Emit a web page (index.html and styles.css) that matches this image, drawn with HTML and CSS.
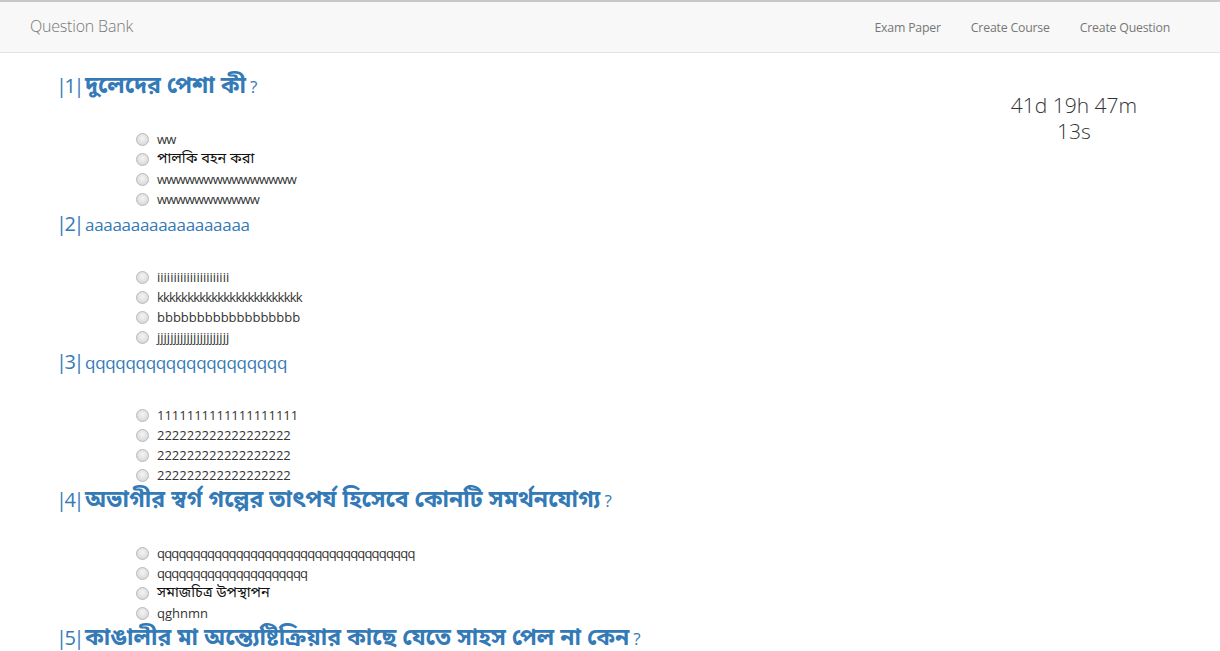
FILE: index.html
```html
<!DOCTYPE html>
<html lang="bn">
<head>
<meta charset="utf-8">
<title>Question Bank</title>
<link rel="stylesheet" href="styles.css">
</head>
<body>
<nav class="navbar">
  <a class="brand" href="#">Question Bank</a>
  <ul class="nav">
    <li><a href="#">Exam Paper</a></li>
    <li><a href="#">Create Course</a></li>
    <li><a href="#">Create Question</a></li>
  </ul>
</nav>
<div class="page">
  <main class="questions">
    <section class="question">
      <h3 class="q-title"><span class="num">|1|</span> <span class="bn">দুলেদের পেশা কী</span> ?</h3>
      <ul class="options">
        <li><span class="radio"></span><span class="narrow">ww</span></li>
        <li><span class="radio"></span><span class="bn-opt">পালকি বহন করা</span></li>
        <li><span class="radio"></span><span class="narrow">wwwwwwwwwwwwwww</span></li>
        <li><span class="radio"></span><span class="narrow">wwwwwwwwwww</span></li>
      </ul>
    </section>
    <section class="question">
      <h3 class="q-title"><span class="num">|2|</span> aaaaaaaaaaaaaaaaaa</h3>
      <ul class="options">
        <li><span class="radio"></span>iiiiiiiiiiiiiiiiiiiiii</li>
        <li><span class="radio"></span><span class="narrow">kkkkkkkkkkkkkkkkkkkkkkkk</span></li>
        <li><span class="radio"></span>bbbbbbbbbbbbbbbbbb</li>
        <li><span class="radio"></span>jjjjjjjjjjjjjjjjjjjjjj</li>
      </ul>
    </section>
    <section class="question">
      <h3 class="q-title"><span class="num">|3|</span> qqqqqqqqqqqqqqqqqqqq</h3>
      <ul class="options">
        <li><span class="radio"></span>1111111111111111111</li>
        <li><span class="radio"></span>222222222222222222</li>
        <li><span class="radio"></span>222222222222222222</li>
        <li><span class="radio"></span>222222222222222222</li>
      </ul>
    </section>
    <section class="question">
      <h3 class="q-title"><span class="num">|4|</span> <span class="bn">অভাগীর স্বর্গ গল্পের তাৎপর্য হিসেবে কোনটি সমর্থনযোগ্য</span> ?</h3>
      <ul class="options">
        <li><span class="radio"></span><span class="narrow">qqqqqqqqqqqqqqqqqqqqqqqqqqqqqqqqqqqq</span></li>
        <li><span class="radio"></span><span class="narrow">qqqqqqqqqqqqqqqqqqqqq</span></li>
        <li><span class="radio"></span><span class="bn-opt">সমাজচিত্র উপস্থাপন</span></li>
        <li><span class="radio"></span>qghnmn</li>
      </ul>
    </section>
    <section class="question">
      <h3 class="q-title"><span class="num">|5|</span> <span class="bn">কাঙালীর মা অন্ত্যেষ্টিক্রিয়ার কাছে যেতে সাহস পেল না কেন</span> ?</h3>
    </section>
  </main>
  <aside class="timer">41d 19h 47m<br>13s</aside>
</div>
</body>
</html>
```
FILE: styles.css
```css
html, body {
  margin: 0;
  padding: 0;
}
body {
  font-family: "Open Sans", "Noto Sans", sans-serif;
  font-size: 14px;
  color: #333;
  background: #fff;
  overflow: hidden;
}
.navbar {
  display: flex;
  align-items: center;
  justify-content: space-between;
  height: 48px;
  background: #f8f8f8;
  border-top: 2px solid #c8c8c8;
  border-bottom: 1px solid #e2e2e2;
  padding: 0 50px 2px 30px;
}
.brand {
  font-size: 16px;
  font-weight: 300;
  color: #777;
  text-decoration: none;
  letter-spacing: -0.2px;
}
.nav {
  display: flex;
  gap: 30px;
  list-style: none;
  margin: 0;
  padding: 0;
}
.nav a {
  font-size: 12.3px;
  color: #777;
  text-decoration: none;
  letter-spacing: -0.2px;
}
.page {
  display: flex;
  justify-content: space-between;
}
.questions {
  padding-left: 56px;
  padding-top: 18px;
}
.question {
  margin: 0;
}
.q-title {
  margin: 0;
  font-size: 17px;
  font-weight: 400;
  color: #337ab7;
  line-height: 30px;
  height: 30px;
  white-space: nowrap;
  letter-spacing: -0.3px;
}
.q-title .num {
  font-size: 20px;
  letter-spacing: -2.5px;
  margin-right: -1px;
}
.q-title .bn {
  font-family: "Noto Sans Bengali", "Noto Sans", "Open Sans", sans-serif;
  font-weight: 700;
  font-size: 23px;
  letter-spacing: 0;
}
.options {
  list-style: none;
  margin: 0;
  padding: 28px 0 0 80px;
  height: 80px;
}
.options li {
  display: flex;
  align-items: center;
  height: 20px;
  font-size: 13px;
  color: #333;
  white-space: nowrap;
}
.narrow {
  letter-spacing: -0.8px;
}
.bn-opt {
  font-family: "Noto Sans Bengali", "Noto Sans", sans-serif;
  font-size: 14.5px;
  color: #111;
}
.radio {
  flex: none;
  width: 11px;
  height: 11px;
  border: 1px solid #b8b8b8;
  border-radius: 50%;
  background: radial-gradient(circle at 50% 40%, #f4f4f4 0%, #dcdcdc 70%, #cfcfcf 100%);
  margin-right: 8px;
}
.timer {
  width: 200px;
  margin-right: 46px;
  padding-top: 39px;
  text-align: center;
  font-size: 21px;
  font-weight: 300;
  line-height: 26px;
  color: #333;
}
```
